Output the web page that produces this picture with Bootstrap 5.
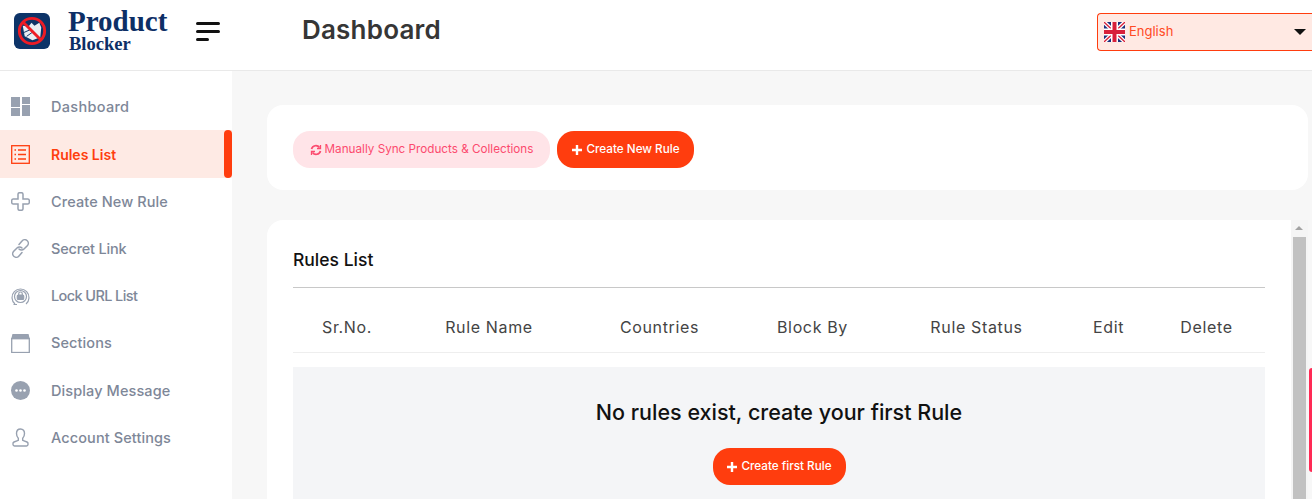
<!DOCTYPE html>
<html lang="en">
<head>
<meta charset="utf-8">
<title>Product Blocker</title>
<link href="https://cdn.jsdelivr.net/npm/bootstrap@5.3.0/dist/css/bootstrap.min.css" rel="stylesheet">
<style>
html,body{height:499px;overflow:hidden}
body{font-family:Inter,"Noto Sans",sans-serif;background:#f7f7f7;color:#222}
.top-bar{height:71px;background:#fff;border-bottom:1px solid #e9e9e9;padding-bottom:8px}
.brand-zone{width:232px;padding-left:14px}
.brand-mark{width:36px;height:36px;flex:none}
.brand-words{margin-left:18px;padding-top:3px;font-family:"Liberation Serif",serif;color:#0d2f66;font-weight:700;line-height:1}
.brand-one{font-size:29px;height:25px;line-height:25px;margin-top:-3px}
.brand-two{font-size:18.500px;line-height:17px;margin-left:1px;margin-top:2px}
.burger{margin-left:29px;width:24px;display:flex;flex-direction:column;gap:5px}
.burger i{display:block;height:3px;background:#111;border-radius:2px}
.burger i:last-child{width:13px}
.page-name{margin-left:70px;font-size:26px;font-weight:600;color:#363636;letter-spacing:.2px;line-height:30px;margin-top:-2px}
.lang-box{width:215px;height:38px;margin-left:auto;margin-top:1px;background:#ffe9e3;border:1px solid #ff3d0e;border-right:0;border-radius:4px 0 0 4px;padding-left:6px;color:#ff4a25;font-size:13px}
.lang-caret{margin-left:auto;margin-right:6px;border:6px solid transparent;border-top:6px solid #111;border-bottom:0;width:0;height:0}
.side-rail{width:232px;height:428px;background:#fff;flex:none;padding-top:12px}
.side-link{height:47.200px;padding-left:11px;color:#7e8798;font-size:14.500px;letter-spacing:.1px;font-weight:500;text-decoration:none;position:relative}
.side-link svg{width:19px;height:19px;flex:none;margin-right:21px}
.side-on{height:48px;background:#feeae4;color:#ff3d0e;font-weight:600;font-size:14px;letter-spacing:0}
.side-on::after{content:"";position:absolute;right:0;top:0;width:8px;height:48px;background:#ff3d0e;border-radius:4px}
.side-tight{letter-spacing:-.2px}
.side-tighter{letter-spacing:-.6px}
.side-wide{letter-spacing:.3px}
.work-area{flex:1;height:428px;overflow:hidden;padding:34px 4px 0 35px;min-width:0}
.sync-card{height:85px;background:#fff;border-radius:16px;padding:26px;margin-bottom:30px;gap:7px}
.pill-btn{height:37px;border:0;border-radius:17px;font-size:11.700px;font-weight:500;display:inline-flex;align-items:center;gap:3px;white-space:nowrap;padding:0}
.pill-sync{width:257px;background:#ffe4e8;color:#fc4a6e;font-weight:400;justify-content:center}
.pill-make{background:#ff3d0e;color:#fff;justify-content:center}
.pill-new{width:137px}
.pill-first{width:133px}
.rules-card{background:#fff;border-radius:16px 0 0 0;height:279px}
.rules-body{flex:1;padding:28px 26px 0 26px;min-width:0}
.rules-title{font-size:17.500px;font-weight:500;color:#111;padding-bottom:15px;border-bottom:1px solid #c8c8c8;line-height:24px}
.rules-head{display:flex;height:65px;align-items:center;padding-top:13px;border-bottom:1px solid #eee;font-size:16px;color:#444;letter-spacing:.65px}
.rules-head span{text-align:center;flex:none}
.empty-zone{margin-top:14px;height:132px;background:#f4f5f7;text-align:center;padding-top:31px}
.empty-zone h2{font-size:21.500px;font-weight:500;color:#111;margin:0 0 22px;line-height:28px}
.fake-scroll{width:17px;flex:none;background:#f5f5f5}
.scroll-up{height:17px;position:relative}
.scroll-up::before{content:"";position:absolute;left:4px;top:6px;border:4px solid transparent;border-bottom:4px solid #a3a3a3;border-top:0}
.scroll-thumb{height:262px;margin:0 2px;background:#c1c1c1}
.red-tab{position:absolute;right:0;top:368px;width:3px;height:104px;background:#ff2a55;border-radius:4px 0 0 4px}
</style>
</head>
<body>
<header class="top-bar d-flex align-items-center">
  <div class="brand-zone d-flex align-items-center">
    <svg class="brand-mark" viewBox="0 0 37 37"><rect width="37" height="37" rx="6" fill="#0d3468"/><path d="M9 13l6 1 3-4 3 3 5-3 2 5-1 10-8 3-8-4z" fill="#e8edf3"/><path d="M8 21l9-4M13 24l7-5" stroke="#0d3468" stroke-width="1"/><circle cx="18.500" cy="18.500" r="13" fill="none" stroke="#ee1c25" stroke-width="3"/><path d="M9.500 9.500l18 18" stroke="#ee1c25" stroke-width="3"/></svg>
    <div class="brand-words"><div class="brand-one">Product</div><div class="brand-two">Blocker</div></div>
    <div class="burger"><i></i><i></i><i></i></div>
  </div>
  <div class="page-name">Dashboard</div>
  <div class="lang-box d-flex align-items-center">
    <svg width="21" height="20" viewBox="0 0 21 20" class="me-1"><rect width="21" height="20" fill="#1a2f7c"/><path d="M0 0l21 20M21 0L0 20" stroke="#fff" stroke-width="4"/><path d="M0 0l21 20M21 0L0 20" stroke="#d8203a" stroke-width="1.300"/><path d="M10.500 0v20M0 10h21" stroke="#fff" stroke-width="7"/><path d="M10.500 0v20M0 10h21" stroke="#d8203a" stroke-width="4"/></svg>
    <span>English</span><span class="lang-caret"></span>
  </div>
</header>
<div class="d-flex">
  <nav class="side-rail">
    <a class="side-link side-wide d-flex align-items-center" href="#"><svg viewBox="0 0 19 19" fill="#98a1b0"><rect width="9" height="10"/><rect x="11" width="8" height="7"/><rect y="11" width="9" height="8"/><rect x="11" y="8" width="8" height="11"/></svg>Dashboard</a>
    <a class="side-link side-on d-flex align-items-center" href="#"><svg viewBox="0 0 19 19" fill="none" stroke="#ff3d0e" stroke-width="1.300"><rect x=".7" y=".7" width="17.600" height="17.600"/><path d="M7 5h8M7 9.500h8M7 14h8M3.500 5h1.500M3.500 9.500h1.500M3.500 14h1.500"/></svg>Rules List</a>
    <a class="side-link d-flex align-items-center" href="#"><svg viewBox="0 0 19 19" fill="none" stroke="#98a1b0" stroke-width="1.500"><path d="M7 2.200A1.500 1.500 0 0 1 8.500.7h2A1.500 1.500 0 0 1 12 2.200V7h4.800a1.500 1.500 0 0 1 1.500 1.500v2a1.500 1.500 0 0 1-1.500 1.500H12v4.800a1.500 1.500 0 0 1-1.500 1.500h-2A1.500 1.500 0 0 1 7 16.800V12H2.200A1.500 1.500 0 0 1 .7 10.500v-2A1.500 1.500 0 0 1 2.200 7H7z"/></svg>Create New Rule</a>
    <a class="side-link side-tight d-flex align-items-center" href="#"><svg viewBox="0 0 19 19" fill="none" stroke="#98a1b0" stroke-width="1.500" stroke-linecap="round"><path d="M8 5.500l3-3.500a3.500 3.500 0 0 1 5.500 4.500l-3.500 3.500a3.500 3.500 0 0 1-5 0"/><path d="M11 13.500l-3 3.500a3.500 3.500 0 0 1-5.500-4.500L6 9a3.500 3.500 0 0 1 5 0"/></svg>Secret Link</a>
    <a class="side-link side-tighter d-flex align-items-center" href="#"><svg viewBox="0 0 19 19" fill="none" stroke="#98a1b0" stroke-width="1.200"><path d="M4 17a8.500 8.500 0 1 1 11 0"/><circle cx="9.500" cy="9.500" r="6"/><rect x="6.300" y="8" width="6.400" height="4.500" rx="1" fill="#98a1b0"/><path d="M7.700 8V6.800a1.800 1.800 0 0 1 3.600 0V8M2.500 17.500h3.500"/></svg>Lock URL List</a>
    <a class="side-link d-flex align-items-center" href="#"><svg viewBox="0 0 19 19" fill="none" stroke="#98a1b0" stroke-width="1.300"><path d="M2 .5h15l1 4H1z" fill="#98a1b0"/><rect x=".7" y="4.500" width="17.600" height="14"/></svg>Sections</a>
    <a class="side-link d-flex align-items-center" href="#"><svg viewBox="0 0 19 19"><circle cx="9.500" cy="9.500" r="9.500" fill="#98a1b0"/><circle cx="5.500" cy="9.500" r="1.300" fill="#fff"/><circle cx="9.500" cy="9.500" r="1.300" fill="#fff"/><circle cx="13.500" cy="9.500" r="1.300" fill="#fff"/></svg>Display Message</a>
    <a class="side-link d-flex align-items-center" href="#"><svg viewBox="0 0 19 19" fill="none" stroke="#98a1b0" stroke-width="1.400"><path d="M9.500 1C6.800 1 5.500 3 5.500 5.500c0 2 .8 3.800 1.800 4.800v2L3 14c-1.500.7-1.500 4 .5 4h12c2 0 2-3.300.5-4l-4.300-1.700v-2c1-1 1.800-2.800 1.800-4.800C13.500 3 12.200 1 9.500 1z"/></svg>Account Settings</a>
  </nav>
  <main class="work-area">
    <section class="sync-card d-flex">
      <button class="pill-btn pill-sync" type="button"><svg width="12" height="12" viewBox="0 0 12 12" fill="none" stroke="#fc4a6e" stroke-width="1.700"><path d="M1.500 5a4.500 4.500 0 0 1 8-1.500M10.500 7a4.500 4.500 0 0 1-8 1.500"/><path d="M10.500 1v3.500H7M1.500 11V7.500H5" stroke-width="1.300"/></svg>Manually Sync Products &amp; Collections</button>
      <button class="pill-btn pill-make pill-new" type="button"><svg width="12" height="12" viewBox="0 0 12 12"><path d="M6 1v10M1 6h10" stroke="#fff" stroke-width="2.400"/></svg>Create New Rule</button>
    </section>
    <section class="rules-card d-flex">
      <div class="rules-body">
        <div class="rules-title">Rules List</div>
        <div class="rules-head">
          <span style="width:108px">Sr.No.</span><span style="width:176px">Rule Name</span><span style="width:165px">Countries</span><span style="width:141px">Block By</span><span style="width:187px">Rule Status</span><span style="width:77px">Edit</span><span style="width:119px">Delete</span>
        </div>
        <div class="empty-zone">
          <h2>No rules exist, create your first Rule</h2>
          <button class="pill-btn pill-make pill-first" type="button"><svg width="12" height="12" viewBox="0 0 12 12"><path d="M6 1v10M1 6h10" stroke="#fff" stroke-width="2.400"/></svg>Create first Rule</button>
        </div>
      </div>
      <div class="fake-scroll"><div class="scroll-up"></div><div class="scroll-thumb"></div></div>
    </section>
  </main>
</div>
<div class="red-tab"></div>
<script src="https://cdn.jsdelivr.net/npm/bootstrap@5.3.0/dist/js/bootstrap.bundle.min.js"></script>
</body>
</html>
